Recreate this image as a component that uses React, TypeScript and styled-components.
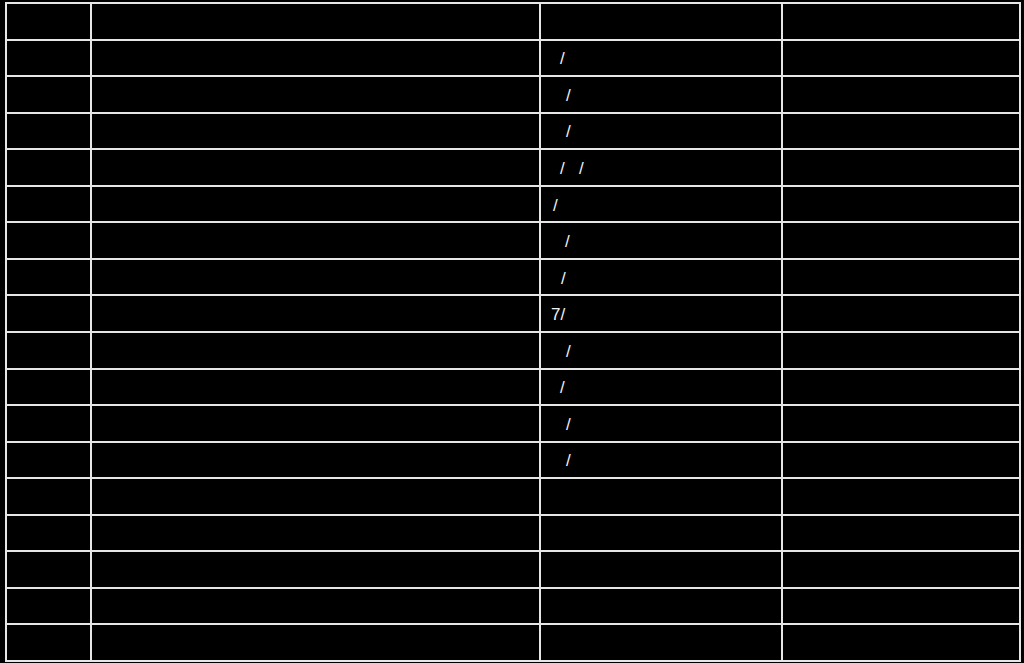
import React from "react";
import styled, { createGlobalStyle } from "styled-components";

const Global = createGlobalStyle`
  html, body {
    margin: 0;
    padding: 0;
    background: #000;
    width: 1024px;
    height: 663px;
    overflow: hidden;
  }
  #root {
    width: 1024px;
    height: 663px;
  }
`;

const Page = styled.div`
  width: 1024px;
  height: 663px;
  background: #000;
  padding: 2px 3px 1px 5px;
  box-sizing: border-box;
`;

const Grid = styled.div`
  display: grid;
  grid-template-columns: 83px 447px 240px 1fr;
  grid-template-rows: repeat(18, 1fr);
  gap: 2px;
  width: 1016px;
  height: 660px;
  box-sizing: border-box;
  border: 2px solid #e6e6e6;
  background: #e6e6e6;
`;

const Cell = styled.div<{ $indent?: number }>`
  background: #000;
  display: flex;
  align-items: center;
  padding-left: ${(p) => p.$indent ?? 0}px;
  padding-top: 2px;
  color: #f2f2f2;
  font-family: "Liberation Sans", Arial, sans-serif;
  font-size: 17px;
  font-weight: 400;
  line-height: 1;
  white-space: pre;
  overflow: hidden;
`;

type Row = { mark: string; indent: number };

const marks: Row[] = [
  { mark: "", indent: 0 },
  { mark: "/", indent: 19 },
  { mark: "/", indent: 25 },
  { mark: "/", indent: 25 },
  { mark: "/   /", indent: 19 },
  { mark: "/", indent: 12 },
  { mark: "/", indent: 24 },
  { mark: "/", indent: 20 },
  { mark: "7/", indent: 10 },
  { mark: "/", indent: 25 },
  { mark: "/", indent: 19 },
  { mark: "/", indent: 25 },
  { mark: "/", indent: 25 },
  { mark: "", indent: 0 },
  { mark: "", indent: 0 },
  { mark: "", indent: 0 },
  { mark: "", indent: 0 },
  { mark: "", indent: 0 },
];

export default function App() {
  return (
    <>
      <Global />
      <Page>
        <Grid>
          {marks.map((r, i) => (
            <React.Fragment key={i}>
              <Cell />
              <Cell />
              <Cell $indent={r.indent}>{r.mark}</Cell>
              <Cell />
            </React.Fragment>
          ))}
        </Grid>
      </Page>
    </>
  );
}
